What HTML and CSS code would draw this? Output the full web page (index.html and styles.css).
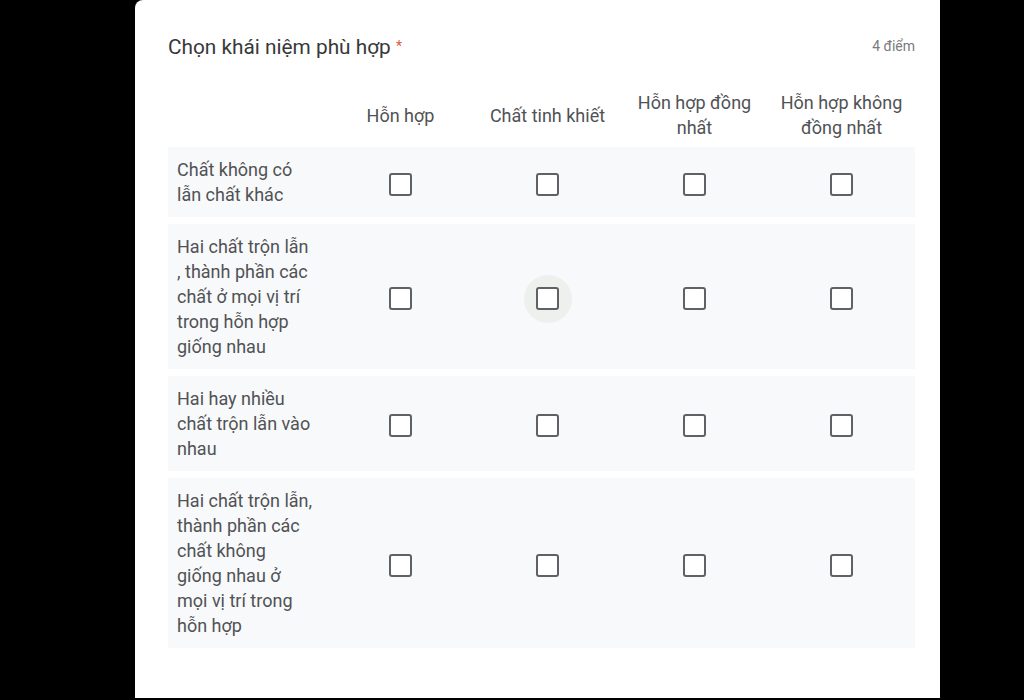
FILE: index.html
```html
<!DOCTYPE html>
<html lang="vi">
<head>
<meta charset="utf-8">
<title>Chọn khái niệm phù hợp</title>
<link rel="stylesheet" href="styles.css">
</head>
<body>
<div class="page">
  <div class="card">
    <div class="title-row">
      <div class="title">Chọn khái niệm phù hợp <span class="req">*</span></div>
      <div class="points">4 điểm</div>
    </div>
    <div class="grid">
      <div class="head-cell"></div>
      <div class="head-cell">Hỗn hợp</div>
      <div class="head-cell">Chất tinh khiết</div>
      <div class="head-cell">Hỗn hợp đồng nhất</div>
      <div class="head-cell">Hỗn hợp không đồng nhất</div>

      <div class="row">
        <div class="label">Chất không có lẫn chất khác</div>
        <div class="cell"><span class="ripple"><span class="box"></span></span></div>
        <div class="cell"><span class="ripple"><span class="box"></span></span></div>
        <div class="cell"><span class="ripple"><span class="box"></span></span></div>
        <div class="cell"><span class="ripple"><span class="box"></span></span></div>
      </div>

      <div class="row">
        <div class="label">Hai chất trộn lẫn , thành phần các chất ở mọi vị trí trong hỗn hợp giống nhau</div>
        <div class="cell"><span class="ripple"><span class="box"></span></span></div>
        <div class="cell"><span class="ripple hover"><span class="box"></span></span></div>
        <div class="cell"><span class="ripple"><span class="box"></span></span></div>
        <div class="cell"><span class="ripple"><span class="box"></span></span></div>
      </div>

      <div class="row">
        <div class="label">Hai hay nhiều chất trộn lẫn vào nhau</div>
        <div class="cell"><span class="ripple"><span class="box"></span></span></div>
        <div class="cell"><span class="ripple"><span class="box"></span></span></div>
        <div class="cell"><span class="ripple"><span class="box"></span></span></div>
        <div class="cell"><span class="ripple"><span class="box"></span></span></div>
      </div>

      <div class="row">
        <div class="label">Hai chất trộn lẫn, thành phần các chất không giống nhau ở mọi vị trí trong hỗn hợp</div>
        <div class="cell"><span class="ripple"><span class="box"></span></span></div>
        <div class="cell"><span class="ripple"><span class="box"></span></span></div>
        <div class="cell"><span class="ripple"><span class="box"></span></span></div>
        <div class="cell"><span class="ripple"><span class="box"></span></span></div>
      </div>
    </div>
  </div>
</div>
</body>
</html>
```

FILE: styles.css
```css
html, body {
  margin: 0;
  padding: 0;
  background: #000;
  height: 100%;
  overflow: hidden;
}

.page {
  display: flex;
  height: 700px;
  padding-left: 135px;
  box-sizing: border-box;
}

.card {
  width: 805px;
  height: 698px;
  background: #fff;
  border-radius: 8px 0 0 0;
  box-sizing: border-box;
  padding: 32px 25px 0 33px;
  font-family: Roboto, "Liberation Sans", Arial, sans-serif;
  border-bottom: 0;
}

.title-row {
  display: flex;
  justify-content: space-between;
  align-items: center;
  height: 28px;
}

.title {
  font-size: 20.8px;
  line-height: 28px;
  color: #37383a;
}

.req {
  color: #e0574c;
  font-size: 14px;
  vertical-align: 3px;
}

.points {
  font-size: 14px;
  color: #7a7b7d;
}

.grid {
  display: grid;
  grid-template-columns: 159px repeat(4, 147px);
  row-gap: 7px;
  margin-top: 30px;
}

.head-cell {
  height: 50px;
  display: flex;
  align-items: center;
  justify-content: center;
  text-align: center;
  font-size: 18px;
  line-height: 25px;
  color: #505255;
  padding: 0 6px;
}

.row {
  display: contents;
}

.label,
.cell {
  background: #f8f9fa;
}

.label {
  padding: 10px 13px 10px 9px;
  font-size: 18px;
  line-height: 25px;
  color: #505255;
}

.cell {
  display: flex;
  align-items: center;
  justify-content: center;
  padding-top: 4px;
}

.ripple {
  width: 48px;
  height: 48px;
  border-radius: 50%;
  display: flex;
  align-items: center;
  justify-content: center;
}

.ripple.hover {
  background: #eef0ee;
}

.box {
  width: 19px;
  height: 19px;
  border: 2.5px solid #5f6164;
  border-radius: 3px;
  background: #fff;
}
```
